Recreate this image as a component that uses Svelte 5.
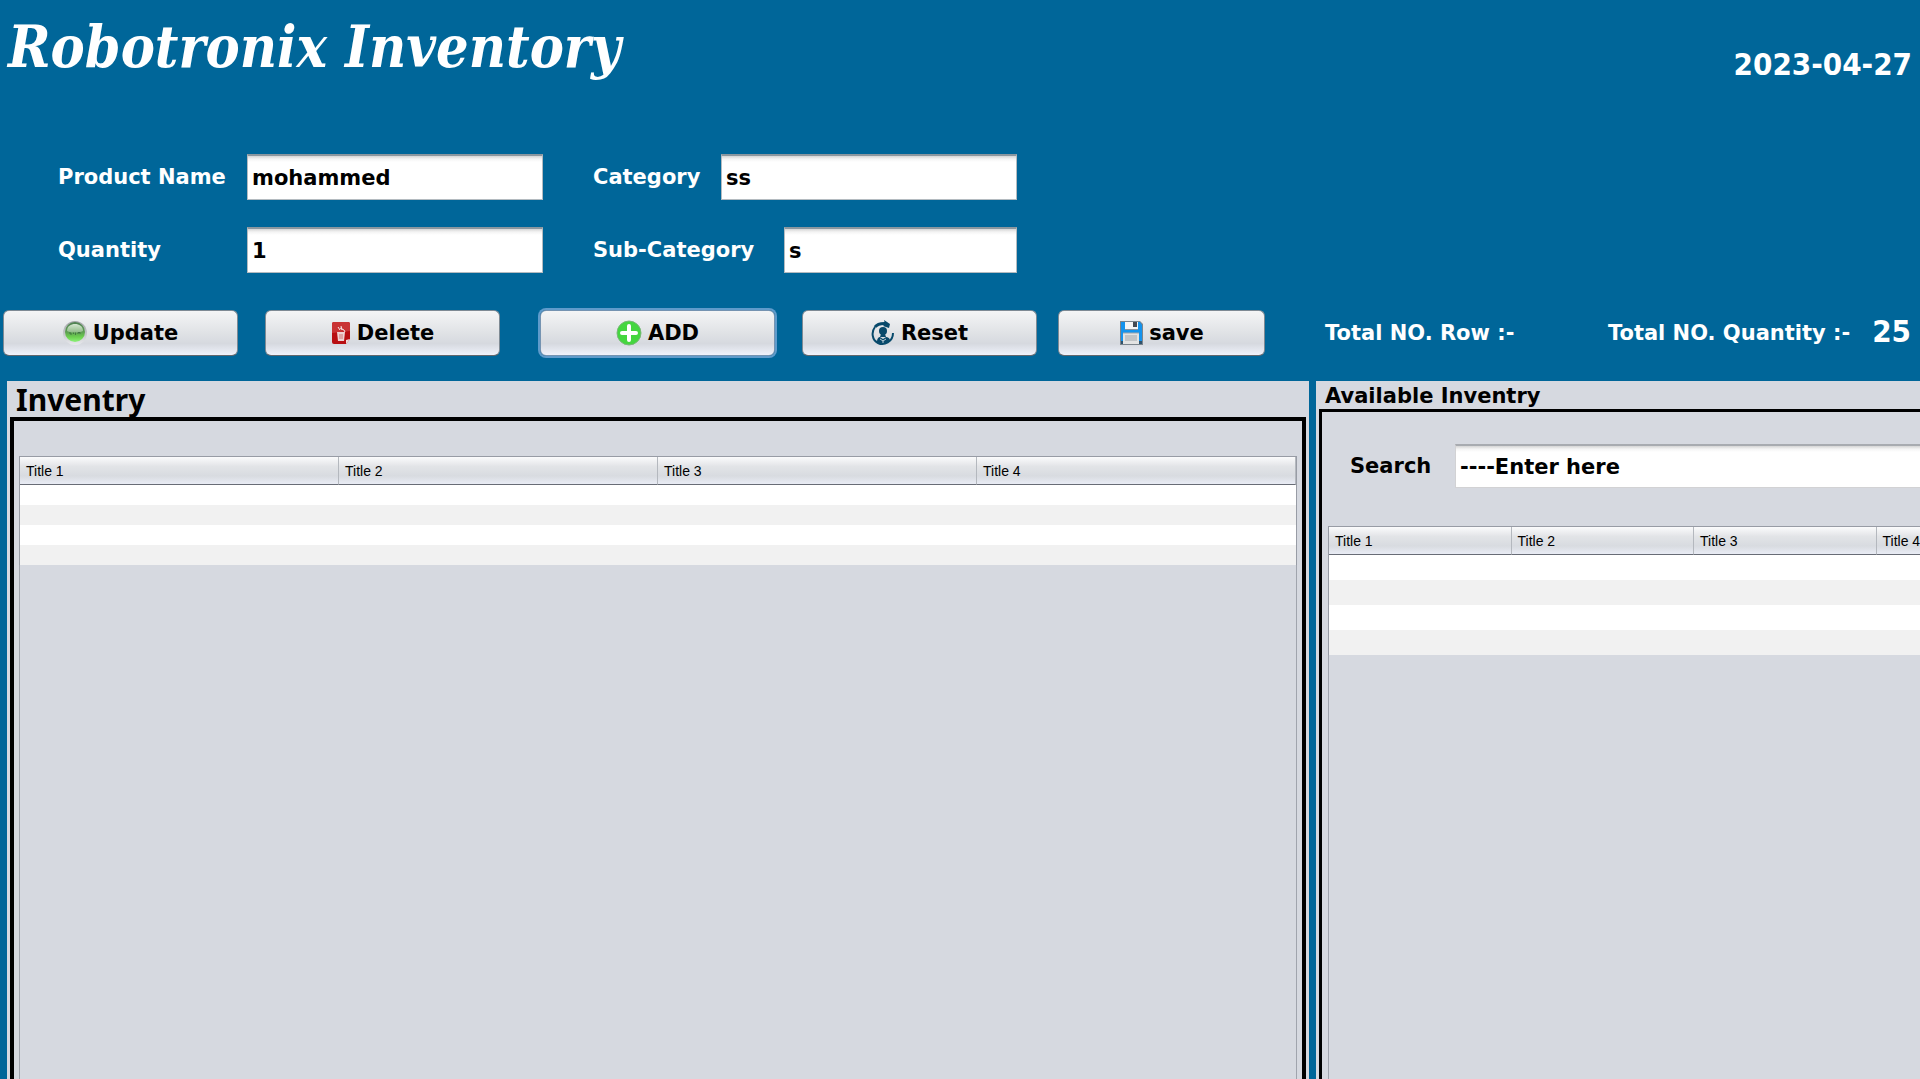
<script>
  let form = $state({ name: 'mohammed', quantity: '1', category: 'ss', subCategory: 's' });
  let search = $state('----Enter here');
  const titles = ['Title 1', 'Title 2', 'Title 3', 'Title 4'];
  const rows = [1, 2, 3, 4];
</script>

<div class="app">
  <header>
    <h1>Robotronix Inventory</h1>
    <time datetime="2023-04-27">2023-04-27</time>
  </header>

  <form onsubmit={(e) => e.preventDefault()}>
    <div class="fields">
      <div class="field wide">
        <label for="name">Product Name</label>
        <input id="name" type="text" bind:value={form.name} />
      </div>
      <div class="field category">
        <label for="category">Category</label>
        <input id="category" type="text" bind:value={form.category} />
      </div>
      <div class="field wide">
        <label for="quantity">Quantity</label>
        <input id="quantity" type="text" bind:value={form.quantity} />
      </div>
      <div class="field sub">
        <label for="sub">Sub-Category</label>
        <input id="sub" type="text" bind:value={form.subCategory} />
      </div>
    </div>

    <div class="toolbar">
      <button type="button">
        <svg width="24" height="26" viewBox="0 0 24 26" aria-hidden="true">
          <defs>
            <linearGradient id="rim" x1="0" y1="0" x2="0" y2="1">
              <stop offset="0" stop-color="#a2a5a6" />
              <stop offset="0.55" stop-color="#c6c8cc" />
              <stop offset="1" stop-color="#e9eaee" />
            </linearGradient>
            <linearGradient id="orb" x1="0" y1="0" x2="0" y2="1">
              <stop offset="0" stop-color="#4f8052" />
              <stop offset="0.5" stop-color="#5d9e52" />
              <stop offset="0.75" stop-color="#6cd04f" />
              <stop offset="1" stop-color="#8df27a" />
            </linearGradient>
            <linearGradient id="gloss" x1="0" y1="0" x2="0" y2="1">
              <stop offset="0" stop-color="#d3e6d0" />
              <stop offset="1" stop-color="#8fbb86" />
            </linearGradient>
          </defs>
          <circle cx="12" cy="13" r="12" fill="url(#rim)" />
          <circle cx="12" cy="12" r="10" fill="url(#orb)" />
          <path d="M4 11C4 6 8 4 12 4s8 2 8 7c-4 2-12 2-16 0z" fill="url(#gloss)" />
          <path d="M7 12v2h2M10.500 12.500v1.500M12.500 12.500v2.500M15 14v-1.500h2v1.500" fill="none" stroke="#35643b" stroke-opacity="0.7" />
        </svg>
        Update
      </button>
      <button type="button">
        <svg width="20" height="24" viewBox="0 0 20 24" aria-hidden="true">
          <path d="M3 1h14a2 2 0 0 1 2 2v15l-4 5H3a2 2 0 0 1-2-2V3a2 2 0 0 1 2-2z" fill="#b80f12" />
          <path d="M3 1h14a2 2 0 0 1 2 2v7L1 12V3a2 2 0 0 1 2-2z" fill="#c93334" />
          <path d="M19 18l-4 5v-4z" fill="#f2dcdc" />
          <path d="M6 11h8l-1 9H7z" fill="#eed3d3" />
          <path d="M7 6l2 3M10 5l1 4M9 7l4 2M13 9l1 2" stroke="#f7e8e8" fill="none" />
          <path d="M9 13v5M11 13v5" stroke="#cf7777" />
        </svg>
        Delete
      </button>
      <button type="button" class="focused">
        <svg width="26" height="26" viewBox="0 0 26 26" aria-hidden="true">
          <circle cx="13" cy="13" r="12" fill="#44d63f" stroke="#79b878" />
          <path d="M13 6v14M6 13h14" stroke="#fff" stroke-width="4" stroke-linecap="round" />
        </svg>
        ADD
      </button>
      <button type="button">
        <svg width="24" height="26" viewBox="0 0 24 26" aria-hidden="true">
          <g fill="none" stroke="#07496b" stroke-width="2">
            <path d="M4 7C6 4 10 3 16 3.500" stroke-width="3" />
            <path d="M4 7C0 12 1 20 7 23c6 3 15-1 15-10" />
          </g>
          <path d="M13 0l6 4-1 4-6-2 2-2z" fill="#07496b" />
          <circle cx="12" cy="11" r="4" fill="#07496b" />
          <path d="M10 14h4l1 3h-6z" fill="#07496b" />
          <path d="M6 22c0-4 2-5 3-5l3 2 3-2c2 0 4 1 4 4l-3 2H8z" fill="#07496b" />
          <path d="M9 19l3 2 3-2M12 20v3" stroke="#b8c9d5" fill="none" />
        </svg>
        Reset
      </button>
      <button type="button">
        <svg width="24" height="24" viewBox="0 0 24 24" aria-hidden="true">
          <path d="M1 0h20l3 3v21H1z" fill="#7c858d" />
          <path d="M2 1h19l2 3v19H2z" fill="#1493ed" />
          <path d="M6 1h13v7H6z" fill="#f5f5f5" />
          <path d="M14 1h4v5h-4z" fill="#444a52" />
          <path d="M6 8h13v1H6z" fill="#8b949c" />
          <path d="M4 12h16v11H4z" fill="#e3e3e3" />
          <path d="M4 12h16M6 15h12M6 17h12M6 19h12" stroke="#a1a5a9" />
          <path d="M2 20h2v3H2zM20 20h3v3h-3z" fill="#30536d" />
        </svg>
        save
      </button>
      <span class="total rows">Total NO. Row :-</span>
      <span class="total">Total NO. Quantity :-</span>
      <output>25</output>
    </div>
  </form>

  <main>
    <section class="panel left">
      <h2>Inventry</h2>
      <div class="frame">
        <table>
          <thead><tr>{#each titles as title}<th scope="col">{title}</th>{/each}</tr></thead>
          <tbody>
            {#each rows as row (row)}
              <tr>{#each titles as _}<td></td>{/each}</tr>
            {/each}
          </tbody>
        </table>
        <div class="rest"></div>
      </div>
    </section>

    <section class="panel right">
      <h2>Available Inventry</h2>
      <div class="frame">
        <div class="search">
          <label for="search">Search</label>
          <input id="search" type="text" bind:value={search} />
        </div>
        <table>
          <thead><tr>{#each titles as title}<th scope="col">{title}</th>{/each}</tr></thead>
          <tbody>
            {#each rows as row (row)}
              <tr>{#each titles as _}<td></td>{/each}</tr>
            {/each}
          </tbody>
        </table>
        <div class="rest"></div>
      </div>
    </section>
  </main>
</div>

<style>
  :global(body) {
    background: #006699;
  }
  .app {
    box-sizing: border-box;
    height: 100vh;
    display: flex;
    flex-direction: column;
    overflow: hidden;
    background: #006699;
    color: #fff;
    font: bold 21px/28px "DejaVu Sans", sans-serif;
  }
  header {
    display: flex;
    justify-content: space-between;
    align-items: flex-start;
    height: 154px;
    padding: 0 8px;
  }
  h1 {
    margin: 11px 0 0;
    font: italic bold 57px/72px "DejaVu Serif Condensed", "DejaVu Serif", serif;
    font-stretch: condensed;
  }
  time,
  output {
    font-family: "DejaVu Sans Condensed", "DejaVu Sans", sans-serif;
    font-stretch: condensed;
  }
  time {
    margin-top: 46px;
    font-size: 31px;
    line-height: 36px;
  }
  .fields {
    display: grid;
    grid-template-columns: 485px 424px;
    gap: 27px 50px;
    padding-left: 58px;
  }
  .field {
    display: grid;
    align-items: center;
  }
  .wide {
    grid-template-columns: 189px 1fr;
  }
  .category {
    grid-template-columns: 128px 1fr;
  }
  .sub {
    grid-template-columns: 191px 1fr;
  }
  input {
    box-sizing: border-box;
    width: 100%;
    height: 46px;
    padding: 0 6px 0 4px;
    border: 1px solid #b4bbc0;
    border-top: 2px solid #8b979f;
    border-radius: 0;
    outline: none;
    background: linear-gradient(#d5d5d5, #f4f4f4 3px, #fff 6px);
    color: #000;
    font: inherit;
  }
  .toolbar {
    display: flex;
    align-items: center;
    height: 46px;
    padding: 37px 9px 25px 3px;
  }
  button {
    box-sizing: border-box;
    display: flex;
    justify-content: center;
    align-items: center;
    gap: 6px;
    width: 235px;
    height: 46px;
    margin: 0 27px 0 0;
    padding: 0;
    border: 1px solid #7e8a94;
    border-bottom-color: #63676d;
    border-radius: 6px;
    background: linear-gradient(#f4f5f6, #e2e4e7 45%, #d6d9df 74%, #eff2fb);
    color: #000;
    font: inherit;
  }
  button:nth-of-type(2) {
    margin-right: 40px;
  }
  button:nth-of-type(4) {
    margin-right: 21px;
  }
  button:nth-of-type(5) {
    width: 207px;
    margin-right: 60px;
  }
  .focused {
    border-color: #7593b1;
    box-shadow: 0 0 0 2px #5f9bcb;
  }
  .total {
    white-space: nowrap;
  }
  .rows {
    margin-right: auto;
  }
  output {
    margin-left: 22px;
    padding-bottom: 4px;
    font-size: 31px;
  }
  main {
    flex: 1;
    min-height: 0;
    display: grid;
    grid-template-columns: minmax(0, 1302fr) minmax(0, 604fr);
    gap: 7px;
    padding-left: 7px;
  }
  .panel {
    display: flex;
    flex-direction: column;
    min-height: 0;
    background: #d6d9e0;
    color: #000;
  }
  h2 {
    margin: 0;
    padding-left: 9px;
    font: inherit;
  }
  .left h2 {
    height: 36px;
    font: bold 30px/38px "Noto Sans", sans-serif;
  }
  .right h2 {
    height: 28px;
    line-height: 30px;
  }
  .frame {
    flex: 1;
    min-height: 0;
    display: flex;
    flex-direction: column;
    border: 4px solid #000;
    border-bottom: 0;
  }
  .left .frame {
    margin: 0 3px;
    padding: 35px 5px 0 5px;
  }
  .right .frame {
    margin-left: 3px;
    padding: 32px 0 0 6px;
    border-width: 3px 0 0 3px;
  }
  .search {
    display: grid;
    grid-template-columns: 105px minmax(0, 1fr);
    align-items: center;
    padding-left: 22px;
  }
  .search input {
    height: 44px;
    border-color: #a8abb0 #d2d2d4 #d2d2d4;
    border-right: 0;
  }
  table {
    box-sizing: border-box;
    width: 100%;
    table-layout: fixed;
    border-collapse: separate;
    border-spacing: 0;
    border: 1px solid #989ca5;
    border-bottom: 0;
    background: #fff;
  }
  .right table {
    width: 732px;
    margin-top: 38px;
  }
  th {
    box-sizing: border-box;
    height: 28px;
    padding: 0 6px;
    border-right: 1px solid #b4b8be;
    border-bottom: 1px solid #686c76;
    background: linear-gradient(#fbfbfc, #e2e4e7 35%, #d8dbe0 70%, #e9ecf5);
    font: 14px/20px "Liberation Sans", Arial, sans-serif;
    text-align: left;
  }
  td {
    height: 20px;
    padding: 0;
  }
  .right td {
    height: 25px;
  }
  tbody tr:nth-child(even) {
    background: #f1f1f1;
  }
  .rest {
    flex: 1;
    border: 1px solid #a0a4ad;
    border-width: 0 1px;
  }
  .right .rest {
    border-right: 0;
  }
</style>
